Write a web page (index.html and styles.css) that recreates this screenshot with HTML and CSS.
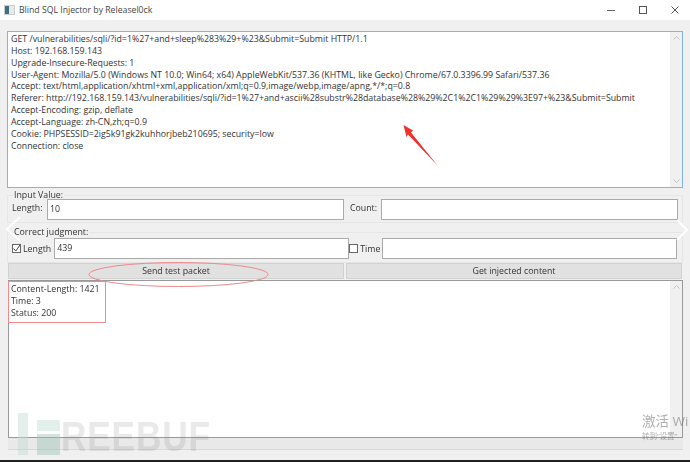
FILE: index.html
```html
<!DOCTYPE html>
<html lang="en">
<head>
<meta charset="utf-8">
<title>Blind SQL Injector by Releasel0ck</title>
<link rel="stylesheet" href="styles.css">
</head>
<body>
<div class="window">
  <header class="titlebar">
    <svg class="app-icon" width="11" height="10" viewBox="0 0 11 10"><rect width="11" height="10" fill="#c9ced0"/><rect x="1" y="1" width="4" height="8" fill="#3f6f7f"/><rect x="5" y="1" width="5" height="8" fill="#e8eaea"/></svg>
    <span class="title">Blind SQL Injector by Releasel0ck</span>
    <div class="controls">
      <svg width="8" height="8" viewBox="0 0 8 8"><path d="M0 4.5H8" stroke="#666" fill="none"/></svg>
      <svg width="8" height="8" viewBox="0 0 8 8"><rect x=".5" y=".5" width="7" height="7" stroke="#555" fill="none"/></svg>
      <svg width="8" height="8" viewBox="0 0 8 8"><path d="M.5 .5L7.5 7.5M7.5 .5L.5 7.5" stroke="#555" fill="none"/></svg>
    </div>
  </header>
  <main class="content">
    <section class="editor editor-top">
      <div class="editor-text">GET /vulnerabilities/sqli/?id=1%27+and+sleep%283%29+%23&amp;Submit=Submit HTTP/1.1
Host: 192.168.159.143
Upgrade-Insecure-Requests: 1
User-Agent: Mozilla/5.0 (Windows NT 10.0; Win64; x64) AppleWebKit/537.36 (KHTML, like Gecko) Chrome/67.0.3396.99 Safari/537.36
Accept: text/html,application/xhtml+xml,application/xml;q=0.9,image/webp,image/apng,*/*;q=0.8
Referer: http://192.168.159.143/vulnerabilities/sqli/?id=1%27+and+ascii%28substr%28database%28%29%2C1%2C1%29%29%3E97+%23&amp;Submit=Submit
Accept-Encoding: gzip, deflate
Accept-Language: zh-CN,zh;q=0.9
Cookie: PHPSESSID=2ig5k91gk2kuhhorjbeb210695; security=low
Connection: close</div>
      <div class="scrollbar">
        <svg width="7" height="4" viewBox="0 0 7 4"><path d="M.5 3.5L3.5 .5L6.5 3.5" stroke="#c4c4c4" fill="none"/></svg>
        <svg width="7" height="4" viewBox="0 0 7 4"><path d="M.5 .5L3.5 3.5L6.5 .5" stroke="#c4c4c4" fill="none"/></svg>
      </div>
    </section>

    <fieldset class="group group-input">
      <legend>Input Value:</legend>
      <div class="row">
        <label class="field-label label-length">Length:</label>
        <div class="input">10</div>
        <label class="field-label label-count">Count:</label>
        <div class="input"></div>
      </div>
    </fieldset>

    <fieldset class="group group-judge">
      <legend>Correct judgment:</legend>
      <div class="row row-judge">
        <span class="check on"><svg width="9" height="9" viewBox="0 0 9 9"><path d="M1.5 4.5L3.8 7L8 1" stroke="#444" fill="none"/></svg></span>
        <span class="check-label">Length</span>
        <div class="input input-judge">439</div>
        <span class="check"></span>
        <span class="check-label check-label-time">Time</span>
        <div class="input input-judge"></div>
      </div>
    </fieldset>

    <div class="buttons">
      <button class="btn" type="button">Send test packet</button>
      <button class="btn" type="button">Get injected content</button>
    </div>

    <section class="editor editor-bottom">
      <div class="editor-text">Content-Length: 1421
Time: 3
Status: 200</div>
      <div class="scrollbar">
        <svg width="7" height="4" viewBox="0 0 7 4"><path d="M.5 3.5L3.5 .5L6.5 3.5" stroke="#c4c4c4" fill="none"/></svg>
      </div>
    </section>
    <div class="hscroll"></div>
  </main>
  <div class="bottom-edge"></div>

  <svg class="annotations" width="690" height="462" viewBox="0 0 690 462">
    <ellipse cx="178.500" cy="274.500" rx="89.500" ry="12" fill="none" stroke="#ee8a8a"/>
    <rect x="8.500" y="281.500" width="97" height="41" fill="none" stroke="#f08a8a"/>
    <path d="M403.500 125L413 130.500L411 132.500L438 166L408 134.500L406.500 137Z" fill="#f0302c"/>
    <path d="M20 217L7 229L20 241" fill="none" stroke="#fff" stroke-width="2" opacity=".9"/>
    <path d="M677 220L687 230L677 240" fill="none" stroke="#fff" stroke-width="2" opacity=".9"/>
    <rect x="18" y="413" width="10" height="42" fill="#bfdcd0" opacity=".45"/>
    <rect x="37" y="420" width="23" height="11" fill="#bfdcd0" opacity=".45"/>
    <rect x="37" y="434" width="23" height="21" fill="#9cc4b4" opacity=".45"/>
  </svg>
  <div class="wm-brand">REEBUF</div>
  <div class="wm-activate">激活 Wi</div>
  <div class="wm-settings">转到“设置”</div>
</div>
</body>
</html>
```
FILE: styles.css
```css
* { box-sizing: border-box; }
html, body { margin: 0; padding: 0; }
body { width: 690px; height: 462px; overflow: hidden; background: #f0f0f0; font-family: "Open Sans", "Noto Sans CJK SC", sans-serif; font-size: 8.8px; color: #333; }
.window { position: relative; width: 690px; height: 462px; display: flex; flex-direction: column; overflow: hidden; filter: blur(.4px); }
.titlebar { flex: 0 0 20px; background: #fff; display: flex; align-items: center; padding: 0 0 0 4px; }
.app-icon { margin-right: 4px; }
.title { font-size: 8.7px; color: #444; }
.controls { margin-left: auto; display: flex; gap: 24px; padding-right: 11px; }
.content { flex: 1; display: flex; flex-direction: column; padding: 11px 7px 0 7px; min-height: 0; }
.editor { background: #fff; display: flex; }
.editor-top { height: 157px; border: 1px solid #7db5ec; }
.editor-bottom { height: 158px; border: 1px solid #999; margin-left: 1px; }
.editor-text { flex: 1; white-space: pre; padding: 2px 3px; line-height: 11.85px; overflow: hidden; }
.editor-bottom .editor-text { padding: 3px 2px; }
.scrollbar { flex: 0 0 12px; background: #f0f0f0; display: flex; flex-direction: column; justify-content: space-between; align-items: center; padding: 4px 0; }
.group { margin: 0; padding: 0 4px; border: 1px solid #e6e6e6; min-width: 0; }
.group legend { padding: 0 1px; margin-left: 1px; line-height: 9px; font-size: 8.8px; }
.group-input { height: 32px; margin-top: 3px; }
.group-judge { height: 35px; margin-top: 5px; }
.row { display: flex; align-items: flex-start; }
.group-input .row { margin-top: -1px; }
.row-judge { align-items: center; margin-top: 1px; }
.field-label { line-height: 12px; padding-top: 3px; }
.label-length { width: 35px; }
.label-count { width: 31px; margin-left: 6px; }
.input { flex: 1; height: 21px; background: #fff; border: 1px solid #aaa; padding: 3px 2px; line-height: 12px; }
.check { width: 9px; height: 9px; border: 1px solid #666; background: #fff; display: flex; flex: none; }
.check svg { margin: -1px; }
.check-label { margin-left: 2px; margin-right: 3px; flex: none; }
.check-label-time { margin-right: 2px; }
.input-judge { flex: 0 0 295px; }
.buttons { display: flex; gap: 2px; margin: 0 0 1px 1px; padding-right: 1px; }
.btn { flex: 1; height: 16px; padding: 0; background: #e1e1e1; border: 1px solid #d2d2d2; font: inherit; color: #333; line-height: 12px; }
.hscroll { height: 12px; margin-left: 1px; background: #e9e9e9; border-bottom: 1px solid #d8d8d8; }
.bottom-edge { flex: 0 0 2px; background: #222; }
.annotations { position: absolute; left: 0; top: 0; }
.wm-brand { position: absolute; left: 61px; top: 416px; font: 700 43px/40px "Liberation Sans", sans-serif; letter-spacing: 1px; color: rgba(120,120,120,.16); transform: scaleX(.82); transform-origin: left top; }
.wm-activate { position: absolute; left: 642px; top: 413px; font-size: 13.5px; line-height: 17px; white-space: nowrap; color: rgba(110,110,110,.55); }
.wm-settings { position: absolute; left: 642px; top: 431px; font-size: 7.5px; line-height: 11px; white-space: nowrap; color: rgba(110,110,110,.55); }
```
